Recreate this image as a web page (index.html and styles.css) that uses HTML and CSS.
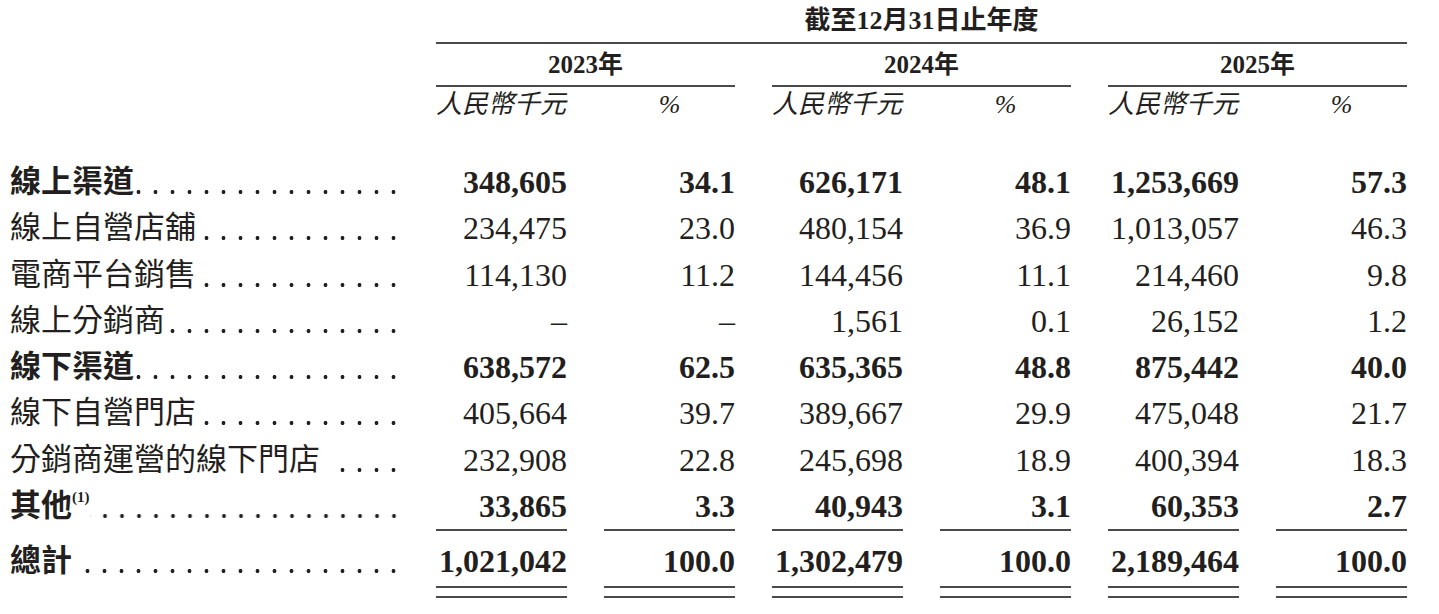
FILE: index.html
```html
<!DOCTYPE html>
<html lang="zh-Hant">
<head>
<meta charset="utf-8">
<title>按渠道劃分的收入</title>
<link rel="stylesheet" href="styles.css">
</head>
<body>
<div class="sheet">
  <div class="blank"></div>
  <div class="period">截至12月31日止年度</div>

  <div class="blank"></div>
  <div class="year">2023年</div>
  <div class="year">2024年</div>
  <div class="year">2025年</div>

  <div class="blank"></div>
  <div class="unit">人民幣千元</div><div class="unit pct">%</div>
  <div class="unit">人民幣千元</div><div class="unit pct">%</div>
  <div class="unit">人民幣千元</div><div class="unit pct">%</div>

  <div class="spacer"></div>

  <div class="label bold"><span class="name">線上渠道</span><span class="leader"></span></div>
  <div class="val bold">348,605</div><div class="val bold">34.1</div>
  <div class="val bold">626,171</div><div class="val bold">48.1</div>
  <div class="val bold">1,253,669</div><div class="val bold">57.3</div>

  <div class="label"><span class="name">線上自營店舖</span><span class="leader"></span></div>
  <div class="val">234,475</div><div class="val">23.0</div>
  <div class="val">480,154</div><div class="val">36.9</div>
  <div class="val">1,013,057</div><div class="val">46.3</div>

  <div class="label"><span class="name">電商平台銷售</span><span class="leader"></span></div>
  <div class="val">114,130</div><div class="val">11.2</div>
  <div class="val">144,456</div><div class="val">11.1</div>
  <div class="val">214,460</div><div class="val">9.8</div>

  <div class="label"><span class="name">線上分銷商</span><span class="leader"></span></div>
  <div class="val">–</div><div class="val">–</div>
  <div class="val">1,561</div><div class="val">0.1</div>
  <div class="val">26,152</div><div class="val">1.2</div>

  <div class="label bold"><span class="name">線下渠道</span><span class="leader"></span></div>
  <div class="val bold">638,572</div><div class="val bold">62.5</div>
  <div class="val bold">635,365</div><div class="val bold">48.8</div>
  <div class="val bold">875,442</div><div class="val bold">40.0</div>

  <div class="label"><span class="name">線下自營門店</span><span class="leader"></span></div>
  <div class="val">405,664</div><div class="val">39.7</div>
  <div class="val">389,667</div><div class="val">29.9</div>
  <div class="val">475,048</div><div class="val">21.7</div>

  <div class="label"><span class="name">分銷商運營的線下門店</span><span class="leader gap"></span></div>
  <div class="val">232,908</div><div class="val">22.8</div>
  <div class="val">245,698</div><div class="val">18.9</div>
  <div class="val">400,394</div><div class="val">18.3</div>

  <div class="label bold"><span class="name">其他<span class="note">(1)</span></span><span class="leader"></span></div>
  <div class="val bold subtotal">33,865</div><div class="val bold subtotal">3.3</div>
  <div class="val bold subtotal">40,943</div><div class="val bold subtotal">3.1</div>
  <div class="val bold subtotal">60,353</div><div class="val bold subtotal">2.7</div>

  <div class="label bold total"><span class="name">總計</span><span class="leader gap"></span></div>
  <div class="val bold total grand">1,021,042</div><div class="val bold total grand">100.0</div>
  <div class="val bold total grand">1,302,479</div><div class="val bold total grand">100.0</div>
  <div class="val bold total grand">2,189,464</div><div class="val bold total grand">100.0</div>
</div>
</body>
</html>
```

FILE: styles.css
```css
html, body {
  margin: 0;
  padding: 0;
  background: #ffffff;
}

.sheet {
  display: grid;
  grid-template-columns: 389px repeat(6, 131px);
  column-gap: 37px;
  padding-left: 10px;
  color: #231f20;
  font-family: "Liberation Serif", "Noto Sans CJK TC", serif;
}

.period {
  grid-column: 2 / -1;
  text-align: center;
  font-size: 26px;
  font-weight: 700;
  line-height: 42px;
  border-bottom: 2px solid #4a4a4a;
}

.year {
  grid-column: span 2;
  text-align: center;
  font-size: 25px;
  font-weight: 700;
  line-height: 41px;
  border-bottom: 2px solid #4a4a4a;
}

.unit {
  font-size: 26px;
  font-style: italic;
  line-height: 36px;
  white-space: nowrap;
}

.unit.pct {
  text-align: center;
}

.spacer {
  grid-column: 1 / -1;
  height: 36px;
}

.label {
  display: flex;
  font-size: 31px;
  line-height: 46.3px;
  white-space: nowrap;
}

.name {
  flex: none;
}

/* dot leader: a row of dots anchored to the right edge of the label column */
.leader {
  flex: 1 1 0;
  min-width: 0;
  background-image: radial-gradient(circle at 8.5px 2px, #231f20 0, #231f20 1.7px, transparent 2.2px);
  background-size: 17px 4px;
  background-repeat: repeat-x;
  background-position: right -3px top 31px;
}

.leader.gap {
  margin-left: 8px;
}

.total .leader {
  background-position: right -3px top 38px;
}

.val {
  font-size: 32px;
  line-height: 46.3px;
  text-align: right;
  white-space: nowrap;
}

.bold {
  font-weight: 700;
}

.note {
  font-size: 15px;
  line-height: 0;
  vertical-align: 14px;
}

.subtotal {
  border-bottom: 2px solid #4a4a4a;
}

.total {
  line-height: 60px;
  padding-bottom: 7px;
}

.grand {
  background-image: linear-gradient(to top,
    #4a4a4a 0, #4a4a4a 2px,
    transparent 2px, transparent 10px,
    #4a4a4a 10px, #4a4a4a 12px,
    transparent 12px);
}
```
